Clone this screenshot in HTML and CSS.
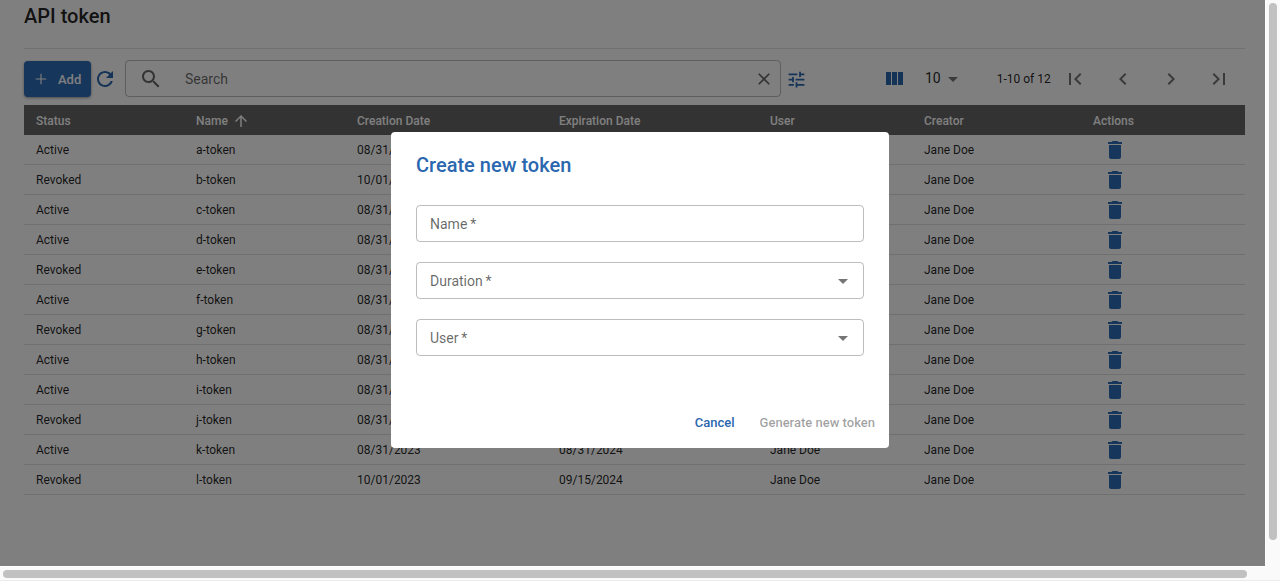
FILE: index.html
```html
<!DOCTYPE html>
<html lang="en">
<head>
  <meta charset="UTF-8" />
  <title>API token</title>
  <link rel="stylesheet" href="styles.css">
</head>
<body>
  <svg class="defs" width="0" height="0">
    <symbol id="i-add" viewBox="0 0 24 24"><path d="M19 12.75h-6.25V19h-1.5v-6.25H5v-1.5h6.25V5h1.5v6.25H19z"/></symbol>
    <symbol id="i-refresh" viewBox="0 0 24 24"><path d="M17.65 6.35C16.2 4.9 14.21 4 12 4c-4.42 0-7.99 3.58-7.99 8s3.57 8 7.99 8c3.73 0 6.84-2.55 7.73-6h-2.08c-.82 2.33-3.04 4-5.65 4-3.31 0-6-2.69-6-6s2.69-6 6-6c1.66 0 3.14.69 4.22 1.78L13 11h7V4l-2.35 2.35z"/></symbol>
    <symbol id="i-search" viewBox="0 0 24 24"><path d="M15.5 14h-.79l-.28-.27C15.41 12.59 16 11.11 16 9.5 16 5.91 13.09 3 9.5 3S3 5.91 3 9.5 5.91 16 9.5 16c1.61 0 3.09-.59 4.23-1.57l.27.28v.79l5 4.99L20.49 19l-4.99-5zm-6 0C7.01 14 5 11.99 5 9.5S7.01 5 9.5 5 14 7.01 14 9.5 11.99 14 9.5 14z"/></symbol>
    <symbol id="i-close" viewBox="0 0 24 24"><path d="M19 6.41L17.59 5 12 10.59 6.41 5 5 6.41 10.59 12 5 17.59 6.41 19 12 13.41 17.59 19 19 17.59 13.41 12z"/></symbol>
    <symbol id="i-tune" viewBox="0 0 24 24"><path d="M3 17v2h6v-2H3zM3 5v2h10V5H3zm10 16v-2h8v-2h-8v-2h-2v6h2zM7 9v2H3v2h4v2h2V9H7zm14 4v-2H11v2h10zm-6-4h2V7h4V5h-4V3h-2v6z"/></symbol>
    <symbol id="i-columns" viewBox="0 0 24 24"><path d="M10 18h5V5h-5v13zm-6 0h5V5H4v13zM16 5v13h5V5h-5z"/></symbol>
    <symbol id="i-drop" viewBox="0 0 24 24"><path d="M7 10l5 5 5-5z"/></symbol>
    <symbol id="i-first" viewBox="0 0 24 24"><path d="M18.41 16.59L13.82 12l4.59-4.59L17 6l-6 6 6 6zM6 6h2v12H6z"/></symbol>
    <symbol id="i-prev" viewBox="0 0 24 24"><path d="M15.41 7.41L14 6l-6 6 6 6 1.41-1.41L10.83 12z"/></symbol>
    <symbol id="i-next" viewBox="0 0 24 24"><path d="M10 6L8.59 7.41 13.17 12l-4.58 4.59L10 18l6-6z"/></symbol>
    <symbol id="i-last" viewBox="0 0 24 24"><path d="M5.59 7.41L10.18 12l-4.59 4.59L7 18l6-6-6-6zM16 6h2v12h-2z"/></symbol>
    <symbol id="i-up" viewBox="0 0 24 24"><path d="M4 12l1.41 1.41L11 7.83V20h2V7.83l5.58 5.59L20 12l-8-8-8 8z"/></symbol>
    <symbol id="i-trash" viewBox="0 0 24 24"><path d="M6 19c0 1.1.9 2 2 2h8c1.1 0 2-.9 2-2V7H6v12zM19 4h-3.5l-1-1h-5l-1 1H5v2h14V4z"/></symbol>
  </svg>

  <div class="window">
    <main class="page">
      <h1 class="page-title">API token</h1>

      <div class="toolbar">
        <button class="add-btn"><svg class="add-icon"><use href="#i-add"/></svg>Add</button>
        <svg class="icon refresh"><use href="#i-refresh"/></svg>
        <div class="search">
          <svg class="icon search-icon"><use href="#i-search"/></svg>
          <span class="search-text">Search</span>
          <svg class="icon-20 search-clear"><use href="#i-close"/></svg>
        </div>
        <svg class="tune"><use href="#i-tune"/></svg>
        <svg class="icon columns"><use href="#i-columns"/></svg>
        <span class="per-page">10</span>
        <svg class="icon per-page-drop"><use href="#i-drop"/></svg>
        <span class="range">1-10 of 12</span>
        <div class="pager">
          <svg class="icon"><use href="#i-first"/></svg>
          <svg class="icon"><use href="#i-prev"/></svg>
          <svg class="icon"><use href="#i-next"/></svg>
          <svg class="icon"><use href="#i-last"/></svg>
        </div>
      </div>

      <table class="tokens">
        <colgroup>
          <col class="c-status"><col class="c-name"><col class="c-created"><col class="c-expires"><col class="c-user"><col class="c-creator"><col class="c-actions">
        </colgroup>
        <thead>
          <tr>
            <th>Status</th>
            <th><span class="sort">Name <svg class="sort-icon"><use href="#i-up"/></svg></span></th>
            <th>Creation Date</th>
            <th>Expiration Date</th>
            <th>User</th>
            <th>Creator</th>
            <th>Actions</th>
          </tr>
        </thead>
        <tbody>
          <tr><td>Active</td><td>a-token</td><td>08/31/2023</td><td>08/31/2024</td><td>Jane Doe</td><td>Jane Doe</td><td><svg class="icon trash"><use href="#i-trash"/></svg></td></tr>
          <tr><td>Revoked</td><td>b-token</td><td>10/01/2023</td><td>09/15/2024</td><td>Jane Doe</td><td>Jane Doe</td><td><svg class="icon trash"><use href="#i-trash"/></svg></td></tr>
          <tr><td>Active</td><td>c-token</td><td>08/31/2023</td><td>08/31/2024</td><td>Jane Doe</td><td>Jane Doe</td><td><svg class="icon trash"><use href="#i-trash"/></svg></td></tr>
          <tr><td>Active</td><td>d-token</td><td>08/31/2023</td><td>08/31/2024</td><td>Jane Doe</td><td>Jane Doe</td><td><svg class="icon trash"><use href="#i-trash"/></svg></td></tr>
          <tr><td>Revoked</td><td>e-token</td><td>08/31/2023</td><td>09/15/2024</td><td>Jane Doe</td><td>Jane Doe</td><td><svg class="icon trash"><use href="#i-trash"/></svg></td></tr>
          <tr><td>Active</td><td>f-token</td><td>08/31/2023</td><td>08/31/2024</td><td>Jane Doe</td><td>Jane Doe</td><td><svg class="icon trash"><use href="#i-trash"/></svg></td></tr>
          <tr><td>Revoked</td><td>g-token</td><td>08/31/2023</td><td>09/15/2024</td><td>Jane Doe</td><td>Jane Doe</td><td><svg class="icon trash"><use href="#i-trash"/></svg></td></tr>
          <tr><td>Active</td><td>h-token</td><td>08/31/2023</td><td>08/31/2024</td><td>Jane Doe</td><td>Jane Doe</td><td><svg class="icon trash"><use href="#i-trash"/></svg></td></tr>
          <tr><td>Active</td><td>i-token</td><td>08/31/2023</td><td>08/31/2024</td><td>Jane Doe</td><td>Jane Doe</td><td><svg class="icon trash"><use href="#i-trash"/></svg></td></tr>
          <tr><td>Revoked</td><td>j-token</td><td>08/31/2023</td><td>09/15/2024</td><td>Jane Doe</td><td>Jane Doe</td><td><svg class="icon trash"><use href="#i-trash"/></svg></td></tr>
          <tr><td>Active</td><td>k-token</td><td>08/31/2023</td><td>08/31/2024</td><td>Jane Doe</td><td>Jane Doe</td><td><svg class="icon trash"><use href="#i-trash"/></svg></td></tr>
          <tr><td>Revoked</td><td>l-token</td><td>10/01/2023</td><td>09/15/2024</td><td>Jane Doe</td><td>Jane Doe</td><td><svg class="icon trash"><use href="#i-trash"/></svg></td></tr>
        </tbody>
      </table>
    </main>

    <div class="backdrop">
      <div class="dialog">
        <h2 class="dialog-title">Create new token</h2>
        <div class="fields">
          <div class="field"><span>Name&thinsp;*</span></div>
          <div class="field"><span>Duration&thinsp;*</span><svg class="icon field-drop"><use href="#i-drop"/></svg></div>
          <div class="field"><span>User&thinsp;*</span><svg class="icon field-drop"><use href="#i-drop"/></svg></div>
        </div>
        <div class="dialog-actions">
          <button class="text-btn">Cancel</button>
          <button class="text-btn disabled">Generate new token</button>
        </div>
      </div>
    </div>

    <div class="scroll-v"><div class="thumb-v"></div></div>
  </div>
  <div class="scroll-h"><div class="thumb-h"></div></div>
</body>
</html>
```

FILE: styles.css
```css
* {
  box-sizing: border-box;
}
html, body {
  margin: 0;
  height: 100%;
  overflow: hidden;
}
body {
  background: #fafafa;
  font-family: Roboto, sans-serif;
  color: rgba(0, 0, 0, 0.87);
  display: flex;
  flex-direction: column;
}
.defs {
  position: absolute;
}
svg {
  fill: currentColor;
  display: block;
  flex: none;
}
.icon {
  width: 24px;
  height: 24px;
}
.icon-20 {
  width: 20px;
  height: 20px;
}
.window {
  position: relative;
  display: flex;
  height: 567px;
  flex: none;
}
.page {
  width: 1266px;
  flex: none;
  padding: 0 21px 0 24px;
  background: #fff;
}
.page-title {
  margin: 0;
  height: 49px;
  padding-top: 4px;
  font-size: 20px;
  line-height: 24px;
  font-weight: 500;
  border-bottom: 1px solid rgba(0, 0, 0, 0.12);
}

/* toolbar */
.toolbar {
  display: flex;
  align-items: center;
  height: 37px;
  margin-top: 11px;
  color: #2a67af;
}
.add-btn {
  display: flex;
  align-items: center;
  gap: 8px;
  width: 67px;
  height: 36px;
  margin-top: 1px;
  padding: 0 0 0 8px;
  border: none;
  border-radius: 4px;
  background: #2e6db8;
  color: #fff;
  font-family: inherit;
  font-size: 13px;
  font-weight: 500;
  box-shadow: 0 1px 3px rgba(0, 0, 0, 0.4);
}
.add-icon {
  width: 18px;
  height: 18px;
}
.refresh {
  margin-left: 2px;
}
.search {
  display: flex;
  align-items: center;
  width: 656px;
  height: 37px;
  margin-left: 8px;
  padding: 0 6px 0 13px;
  border: 1px solid rgba(0, 0, 0, 0.26);
  border-radius: 4px;
  color: rgba(0, 0, 0, 0.6);
}
.search-text {
  flex: 1;
  margin-left: 22px;
  font-size: 14px;
}
.tune {
  width: 21px;
  height: 21px;
  margin: 2px 1px 0 5px;
}
.columns {
  margin-left: 74px;
}
.per-page {
  margin: -2px 0 0 19px;
  font-size: 14px;
  color: rgba(0, 0, 0, 0.87);
}
.per-page-drop {
  color: rgba(0, 0, 0, 0.54);
}
.range {
  margin-left: 32px;
  font-size: 12px;
  color: rgba(0, 0, 0, 0.87);
}
.pager {
  display: flex;
  gap: 24px;
  margin-left: 12px;
  color: rgba(0, 0, 0, 0.54);
}

/* table */
.tokens {
  width: 1221px;
  margin-top: 8px;
  border-collapse: separate;
  border-spacing: 0;
  table-layout: fixed;
  font-size: 12px;
}
.c-status { width: 160px; }
.c-name { width: 161px; }
.c-created { width: 202px; }
.c-expires { width: 211px; }
.c-user { width: 154px; }
.c-creator { width: 169px; }
.c-actions { width: 164px; }
.tokens th {
  height: 30px;
  padding: 1px 12px 0;
  background: #666;
  color: #fff;
  text-align: left;
  font-weight: 500;
}
.tokens td {
  height: 30px;
  padding: 0 12px;
  border-bottom: 1px solid rgba(0, 0, 0, 0.12);
}
.sort {
  display: flex;
  align-items: center;
  gap: 4px;
}
.sort-icon {
  width: 18px;
  height: 18px;
}
.trash {
  margin-left: 10px;
  color: #2e6db8;
}

/* dialog */
.backdrop {
  position: absolute;
  left: 0;
  top: 0;
  width: 1265px;
  height: 566px;
  background: rgba(0, 0, 0, 0.5);
}
.dialog {
  position: absolute;
  left: 391px;
  top: 132px;
  width: 498px;
  height: 316px;
  display: flex;
  flex-direction: column;
  padding: 0 14px 0 25px;
  background: #fff;
  border-radius: 4px;
}
.dialog-title {
  margin: 21px 0 0;
  font-size: 20px;
  line-height: 24px;
  font-weight: 500;
  color: #2a67af;
}
.fields {
  display: flex;
  flex-direction: column;
  gap: 20px;
  width: 448px;
  margin-top: 28px;
}
.field {
  display: flex;
  align-items: center;
  justify-content: space-between;
  height: 37px;
  padding: 0 15px 0 13px;
  border: 1px solid rgba(0, 0, 0, 0.26);
  border-radius: 4px;
  font-size: 14px;
  color: rgba(0, 0, 0, 0.6);
}
.field-drop {
  margin-right: -7px;
  color: rgba(0, 0, 0, 0.54);
}
.dialog-actions {
  display: flex;
  justify-content: flex-end;
  gap: 25px;
  margin-top: auto;
  padding-bottom: 16px;
}
.text-btn {
  padding: 0;
  border: none;
  background: none;
  font-family: inherit;
  font-size: 13px;
  line-height: 18px;
  font-weight: 500;
  color: #2a67af;
}
.text-btn.disabled {
  color: rgba(0, 0, 0, 0.38);
}

/* scrollbars */
.scroll-v {
  flex: 1;
  padding: 3px 3px 0;
  background: #fafafa;
}
.thumb-v {
  height: 537px;
  border-radius: 4px;
  background: #c1c1c1;
}
.scroll-h {
  flex: 1;
  padding: 3px 3px 0;
  background: #fafafa;
  border-bottom: 1px solid #ececec;
}
.thumb-h {
  width: 1244px;
  height: 8px;
  border-radius: 4px;
  background: #c1c1c1;
}
```
